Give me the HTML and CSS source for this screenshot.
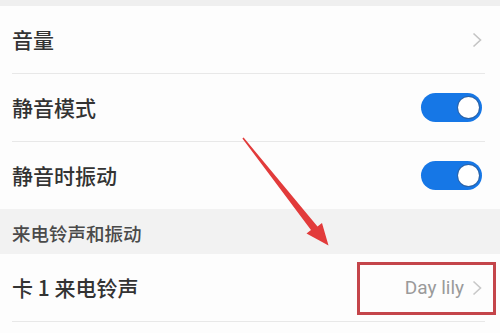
FILE: index.html
```html
<!DOCTYPE html>
<html lang="zh">
<head>
<meta charset="utf-8">
<link rel="stylesheet" href="styles.css">
</head>
<body>
<div class="page">
  <div class="topstrip"></div>
  <div class="row">
    <span class="label">音量</span>
    <svg class="chev" viewBox="0 0 10 16" width="10" height="16"><path d="M1.5 1.5 L8.5 8 L1.5 14.5" fill="none" stroke="#c4c4c4" stroke-width="1.6"/></svg>
  </div>
  <div class="row">
    <span class="label">静音模式</span>
    <span class="toggle"><span class="knob"></span></span>
  </div>
  <div class="row last">
    <span class="label">静音时振动</span>
    <span class="toggle"><span class="knob"></span></span>
  </div>
  <div class="section">来电铃声和振动</div>
  <div class="row">
    <span class="label">卡 1 来电铃声</span>
    <span class="value">Day lily
      <svg class="chev" viewBox="0 0 10 16" width="10" height="16"><path d="M1.5 1.5 L8.5 8 L1.5 14.5" fill="none" stroke="#c8c8c8" stroke-width="1.6"/></svg>
    </span>
  </div>
  <div class="redbox"></div>
  <svg class="arrow" viewBox="0 0 500 333" width="500" height="333">
    <polygon points="243.6,137.4 317.5,226.5 322,223 328.5,245.5 306.5,233.5 311,229.9 242.4,138.6" fill="#e23b3b"/>
  </svg>
</div>
</body>
</html>
```
FILE: styles.css
```css
html, body {
  margin: 0;
  padding: 0;
  background: #fdfdfd;
}
.page {
  position: relative;
  width: 500px;
  height: 333px;
  overflow: hidden;
  font-family: "Noto Sans CJK SC", "Noto Sans", sans-serif;
  color: #333;
  display: flex;
  flex-direction: column;
}
.topstrip {
  height: 6px;
  background: #efefef;
  flex: none;
}
.row {
  height: 67px;
  flex: none;
  margin: 0 15px 0 12px;
  border-bottom: 1px solid #e8e8e8;
  display: flex;
  align-items: center;
  justify-content: space-between;
}
.row.last {
  border-bottom: none;
}
.label {
  font-size: 21px;
  font-weight: 500;
  line-height: 1;
}
.chev {
  display: block;
  margin-right: 3px;
}
.toggle {
  width: 61px;
  height: 29px;
  margin-right: 3px;
  border-radius: 15px;
  background: #1677e6;
  display: flex;
  align-items: center;
  justify-content: flex-end;
  padding-right: 3px;
  box-sizing: border-box;
}
.knob {
  width: 21px;
  height: 21px;
  border-radius: 50%;
  background: #fff;
  box-shadow: 0 0 0 1px #2b63a8;
}
.section {
  height: 45px;
  flex: none;
  background: #f2f2f2;
  font-size: 18.5px;
  font-weight: 500;
  color: #4a4a4a;
  padding-left: 12px;
  display: flex;
  align-items: center;
  padding-top: 2px;
  box-sizing: border-box;
}
.value {
  display: flex;
  align-items: center;
  gap: 8px;
  font-family: "Roboto", "Noto Sans", sans-serif;
  font-size: 19px;
  color: #9a9a9a;
}
.redbox {
  position: absolute;
  left: 357px;
  top: 262px;
  width: 139px;
  height: 53px;
  border: 3px solid #c4454a;
  box-sizing: border-box;
}
.arrow {
  position: absolute;
  left: 0;
  top: 0;
}
```
